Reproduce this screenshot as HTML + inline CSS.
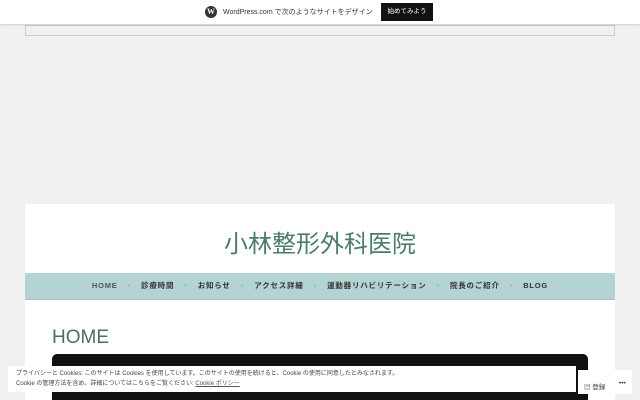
<!DOCTYPE html>
<html style="overflow:hidden"><head><meta charset="utf-8"><style>
html,body{overflow:hidden;height:400px}
body{margin:0;width:640px;height:400px;background:#f0f0f0;font-family:"Liberation Sans","Noto Sans CJK JP",sans-serif;position:relative;overflow:hidden}
.top{position:absolute;left:0;top:0;width:640px;height:24px;background:#fff;box-shadow:0 1px 2px rgba(0,0,0,.15);z-index:2}
.top .t{position:absolute;left:223px;top:7px;font-size:7px;color:#333}
.top .b{position:absolute;left:381px;top:3px;width:52px;height:18px;background:#111;color:#fff;font-size:6.5px;line-height:18px;text-align:center}
.wp{position:absolute;left:205px;top:6px;width:12px;height:12px;border-radius:50%;background:#333;color:#fff;font:bold 8px/12px "Liberation Serif",serif;text-align:center}
.ph{position:absolute;left:25px;top:25px;width:588px;height:9px;border:1px solid #ccc}
.box{position:absolute;left:25px;top:204px;width:590px;height:196px;background:#fff;overflow:hidden}
.title{position:absolute;left:0;width:590px;top:20px;text-align:center;font-size:24px;color:#4b7b6b}
.nav{position:absolute;left:0;top:69px;width:590px;height:26px;background:#b3d4d2;border-bottom:1px solid #a3c4c2;font-size:7.5px;font-weight:bold;color:#333;line-height:26px;text-align:center;letter-spacing:.8px}
.nav span{margin:0 10px}.nav i{font-style:normal;color:#9bb}
.h{position:absolute;left:27px;top:123px;font-size:19px;color:#4a6e66}
.vid{position:absolute;left:27px;top:150px;width:536px;height:60px;background:#111;border-radius:5px}
.ck{position:absolute;left:8px;top:366px;width:568px;height:26px;background:#fff;font-size:6px;color:#444;line-height:10px;padding:3px 8px;box-sizing:border-box}
.ck u{color:#555}
.w{position:absolute;left:578px;top:370px;width:54px;height:24px;background:#fff;font-size:6.5px;color:#333}
</style></head><body>
<div class="top"><div class="wp">W</div><div class="t">WordPress.com で次のようなサイトをデザイン</div><div class="b">始めてみよう</div></div>
<div class="ph"></div>
<div class="box">
<div class="title">小林整形外科医院</div>
<div class="nav"><span style="color:#555">HOME</span><i>•</i><span>診療時間</span><i>•</i><span>お知らせ</span><i>•</i><span>アクセス詳細</span><i>•</i><span>運動器リハビリテーション</span><i>•</i><span>院長のご紹介</span><i>•</i><span>BLOG</span></div>
<div class="h">HOME</div>
<div class="vid"></div>
</div>
<div class="ck">プライバシーと Cookies: このサイトは Cookies を使用しています。このサイトの使用を続けると、Cookie の使用に同意したとみなされます。<br>Cookie の管理方法を含め、詳細についてはこちらをご覧ください: <u>Cookie ポリシー</u></div>
<div class="w"><div style="position:absolute;left:6px;top:11px">▤ 登録</div><div style="position:absolute;left:41px;top:10px">•••</div></div>
</body></html>
